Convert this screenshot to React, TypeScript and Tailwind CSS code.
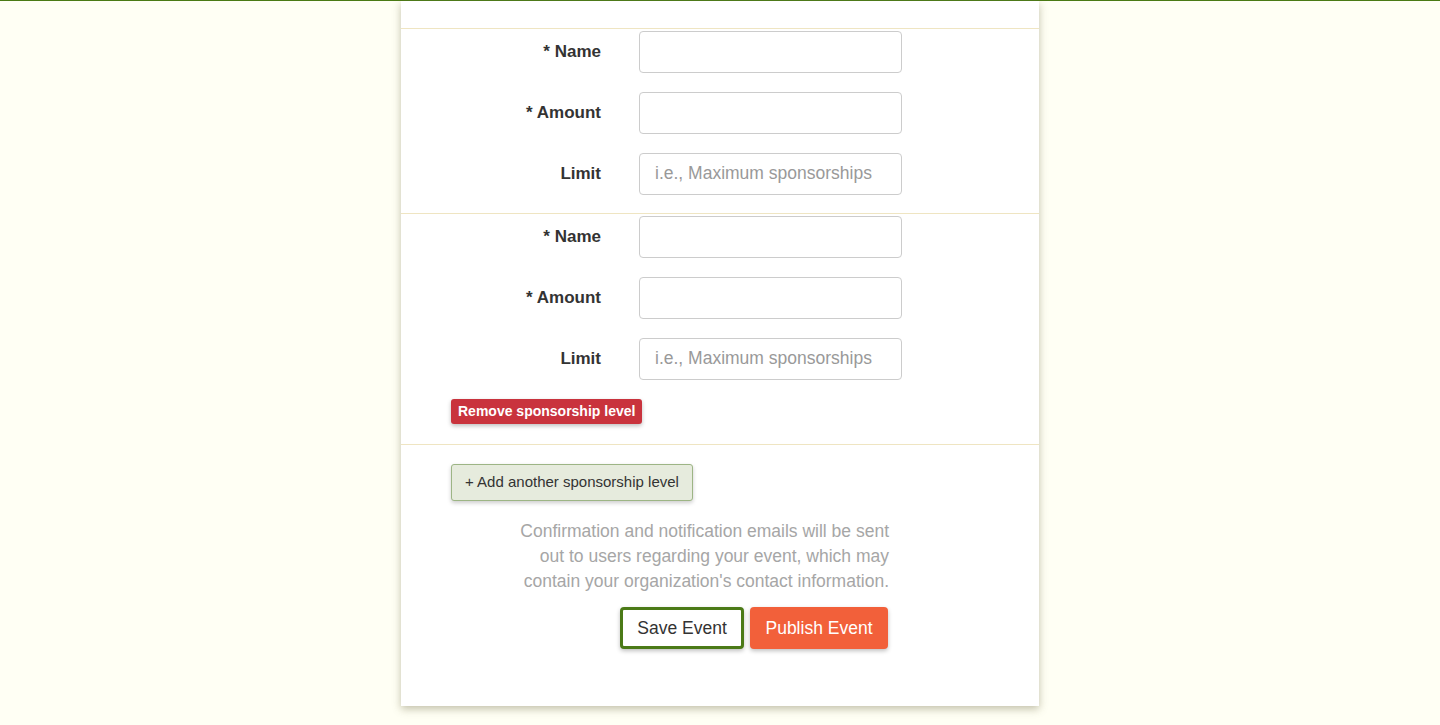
import React from 'react';

const font = { fontFamily: '"Liberation Sans", Arial, sans-serif' };

function Row({ label, placeholder }: { label: string; placeholder?: string }) {
    return (
        <div className="flex items-center h-[41px]">
            <label className="w-[200px] text-right text-[17px] font-bold text-[#333]">{label}</label>
            <input
                type="text"
                placeholder={placeholder}
                className="ml-[38px] w-[263px] h-[42px] rounded-[4px] border border-[#ccc] bg-white px-[15px] text-[17.5px] text-[#333] placeholder:text-[#999] outline-none"
            />
        </div>
    );
}

function Level({ removable }: { removable?: boolean }) {
    return (
        <div className="flex flex-col gap-[20px] pt-[2px] pb-[19px]">
            <Row label="* Name" />
            <Row label="* Amount" />
            <Row label="Limit" placeholder="i.e., Maximum sponsorships" />
            {removable && (
                <div className="pl-[50px] pb-[1px]">
                    <button className="h-[25px] px-[7px] rounded-[3px] bg-[#c9333d] text-white text-[14px] font-bold shadow-[0_2px_4px_rgba(0,0,0,0.25)]">
                        Remove sponsorship level
                    </button>
                </div>
            )}
        </div>
    );
}

export default function App() {
    return (
        <div className="min-h-[725px] bg-[#fffff4] border-t border-[#4a7a14]" style={font}>
            <div className="mx-auto w-[638px] bg-white shadow-[0_3px_8px_rgba(120,115,80,0.45)] pb-[57px]">
                <div className="h-[28px] border-b border-[#efe5c2]" />
                <div className="border-b border-[#efe5c2]">
                    <Level />
                </div>
                <div className="border-b border-[#efe5c2]">
                    <Level removable />
                </div>
                <div className="pl-[50px] pt-[19px]">
                    <button className="h-[37px] px-[13px] rounded-[3px] border border-[#9db585] bg-[#e6ebdd] text-[#333] text-[15px] shadow-[0_2px_4px_rgba(0,0,0,0.2)]">
                        + Add another sponsorship level
                    </button>
                    <div className="w-[438px] mt-[18px] text-right text-[17.5px] leading-[25px] text-[#a6a6a6]">
                        Confirmation and notification emails will be sent<br />
                        out to users regarding your event, which may<br />
                        contain your organization's contact information.
                    </div>
                    <div className="w-[438px] flex justify-end gap-[6px] mt-[13px] pr-[1px]">
                        <button className="h-[42px] w-[124px] rounded-[4px] border-[3px] border-[#4b7a17] bg-white text-[#333] text-[17.5px] shadow-[0_2px_4px_rgba(0,0,0,0.25)]">
                            Save Event
                        </button>
                        <button className="h-[42px] w-[138px] rounded-[4px] bg-[#f2603a] text-white text-[17.5px] shadow-[0_2px_4px_rgba(0,0,0,0.25)]">
                            Publish Event
                        </button>
                    </div>
                </div>
            </div>
        </div>
    );
}
